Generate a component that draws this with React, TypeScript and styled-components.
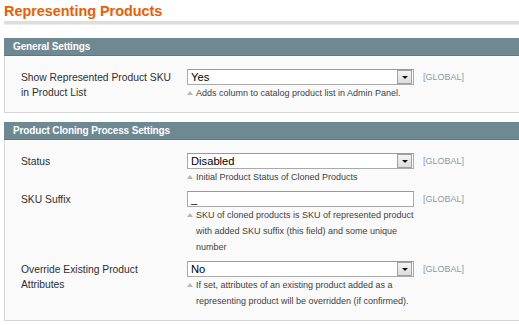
import React from 'react';
import styled, { createGlobalStyle } from 'styled-components';

const GlobalStyle = createGlobalStyle`
  html, body {
    margin: 0;
    padding: 0;
    background: #fff;
    overflow: hidden;
  }
  body {
    font-family: "Liberation Sans", Arial, Helvetica, sans-serif;
    font-size: 10.3px;
    color: #2f2f2f;
  }
`;

const Page = styled.div`
  width: 560px;
  padding: 2px 0 0 4px;
`;

const Title = styled.h3`
  margin: 0;
  font-size: 14.4px;
  line-height: 18px;
  font-weight: bold;
  color: #eb5e00;
`;

const TitleRule = styled.div`
  margin-top: 1px;
  height: 3px;
  background: #dedede;
  border-bottom: 1px solid #ececec;
`;

const Section = styled.section<{ $first?: boolean }>`
  margin-top: ${p => (p.$first ? '13px' : '9px')};
`;

const SectionHead = styled.div`
  height: 17px;
  padding: 0 9px;
  background: #6f8992;
  border-bottom: 1px solid #5f7780;
  color: #fff;
  font-weight: bold;
  font-size: 10px;
  letter-spacing: -0.15px;
  line-height: 17px;
`;

const SectionBody = styled.div`
  background: #fafafa;
  border: 1px solid #d6d6d6;
  border-top: none;
  padding: 13px 0 11px 16px;
  display: flex;
  flex-direction: column;
  gap: 6px;
`;

const Row = styled.div`
  display: grid;
  grid-template-columns: 157px 227px auto;
  column-gap: 9px;
  align-items: start;
`;

const Label = styled.div`
  line-height: 15px;
  padding-top: 1px;
  color: #2f2f2f;
  max-width: 150px;
`;

const Value = styled.div`
  display: flex;
  flex-direction: column;
`;

const FieldBox = styled.div`
  height: 14px;
  border: 1px solid #aaa;
  border-top-color: #999;
  background: #fff;
  padding: 0 3px;
  font-size: 11.2px;
  line-height: 15px;
  color: #000;
  display: flex;
  align-items: center;
  justify-content: space-between;
`;

const ArrowButton = styled.span`
  width: 13px;
  height: 12px;
  margin-right: -2px;
  border: 1px solid #a0a0a0;
  background: linear-gradient(#f4f4f4, #dcdcdc);
  display: flex;
  align-items: center;
  justify-content: center;

  &::after {
    content: '';
    border-left: 3px solid transparent;
    border-right: 3px solid transparent;
    border-top: 3px solid #111;
  }
`;

const Hint = styled.div`
  display: flex;
  gap: 3px;
  font-size: 9px;
  line-height: 16px;
  color: #3f3f3f;
`;

const HintMark = styled.span`
  flex: none;
  width: 6px;
  height: 16px;
  display: flex;
  align-items: center;
  justify-content: center;

  &::before {
    content: '';
    border-left: 3px solid transparent;
    border-right: 3px solid transparent;
    border-bottom: 4px solid #b5b5b5;
  }
`;

const Scope = styled.div`
  font-size: 9px;
  line-height: 15px;
  padding-top: 1px;
  color: #8e9aa3;
`;

type Field = {
  label: string;
  kind: 'select' | 'text';
  value: string;
  hint: string;
};

const general: Field[] = [
  {
    label: 'Show Represented Product SKU in Product List',
    kind: 'select',
    value: 'Yes',
    hint: 'Adds column to catalog product list in Admin Panel.',
  },
];

const cloning: Field[] = [
  {
    label: 'Status',
    kind: 'select',
    value: 'Disabled',
    hint: 'Initial Product Status of Cloned Products',
  },
  {
    label: 'SKU Suffix',
    kind: 'text',
    value: '_',
    hint: 'SKU of cloned products is SKU of represented product with added SKU suffix (this field) and some unique number',
  },
  {
    label: 'Override Existing Product Attributes',
    kind: 'select',
    value: 'No',
    hint: 'If set, attributes of an existing product added as a representing product will be overridden (if confirmed).',
  },
];

const FieldRow = ({ field }: { field: Field }) => (
  <Row>
    <Label>{field.label}</Label>
    <Value>
      <FieldBox>
        <span>{field.value}</span>
        {field.kind === 'select' && <ArrowButton />}
      </FieldBox>
      <Hint>
        <HintMark />
        <span>{field.hint}</span>
      </Hint>
    </Value>
    <Scope>[GLOBAL]</Scope>
  </Row>
);

const App: React.FC = () => (
  <>
    <GlobalStyle />
    <Page>
      <Title>Representing Products</Title>
      <TitleRule />

      <Section $first>
        <SectionHead>General Settings</SectionHead>
        <SectionBody>
          {general.map(f => <FieldRow key={f.label} field={f} />)}
        </SectionBody>
      </Section>

      <Section>
        <SectionHead>Product Cloning Process Settings</SectionHead>
        <SectionBody>
          {cloning.map(f => <FieldRow key={f.label} field={f} />)}
        </SectionBody>
      </Section>
    </Page>
  </>
);

export default App;
